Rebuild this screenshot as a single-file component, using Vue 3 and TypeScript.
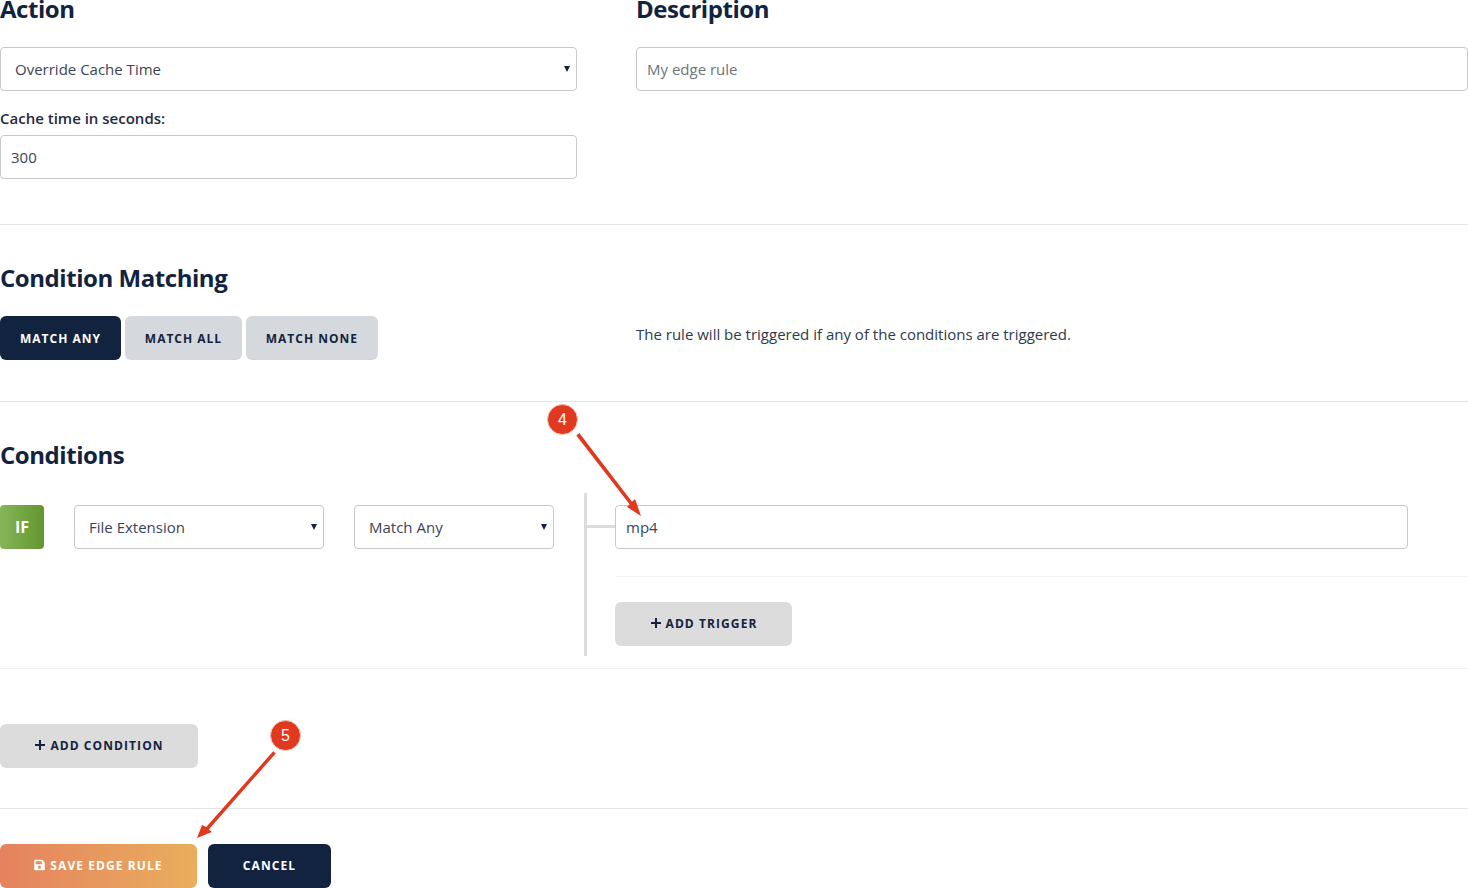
<script setup lang="ts">
const heading = 'Condition Matching'
const matchModes = [
  { label: 'MATCH ANY', active: true },
  { label: 'MATCH ALL', active: false },
  { label: 'MATCH NONE', active: false },
]
</script>

<template>
  <div class="page">
    <section class="top">
      <div class="col">
        <h2>Action</h2>
        <div class="select-wrap">
          <select class="field pick"><option>Override Cache Time</option></select>
          <span class="caret"></span>
        </div>
        <label class="lbl">Cache time in seconds:</label>
        <input class="field" value="300" />
      </div>
      <div class="col">
        <h2>Description</h2>
        <input class="field" placeholder="My edge rule" />
      </div>
    </section>

    <section class="matching">
      <h2>{{ heading }}</h2>
      <div class="match-row">
        <div class="btns">
          <button v-for="m in matchModes" :key="m.label" class="btn" :class="m.active ? 'navy' : 'soft'">{{ m.label }}</button>
        </div>
        <p class="hint">The rule will be triggered if any of the conditions are triggered.</p>
      </div>
    </section>

    <section class="conditions">
      <h2>Conditions</h2>
      <div class="cond">
        <div class="cond-left">
          <div class="if">IF</div>
          <div class="select-wrap w250">
            <select class="field pick"><option>File Extension</option></select>
            <span class="caret"></span>
          </div>
          <div class="select-wrap w200">
            <select class="field pick"><option>Match Any</option></select>
            <span class="caret"></span>
          </div>
        </div>
        <div class="cond-right">
          <span class="connector"></span>
          <input class="field w793" value="mp4" />
          <div class="thin"></div>
          <button class="btn grey lift trigger">
            <svg class="plus" viewBox="0 0 12 12"><path d="M6 1v10M1 6h10" /></svg>ADD TRIGGER
          </button>
        </div>
      </div>
      <button class="btn grey lift add-cond">
        <svg class="plus" viewBox="0 0 12 12"><path d="M6 1v10M1 6h10" /></svg>ADD CONDITION
      </button>
    </section>

    <section class="actions">
      <button class="btn lift save">
        <svg class="disk" viewBox="0 0 448 512"><path fill="currentColor" d="M433.9 129.9l-83.9-83.9A48 48 0 0 0 316.1 32H48C21.5 32 0 53.5 0 80v352c0 26.5 21.5 48 48 48h352c26.5 0 48-21.5 48-48V163.9a48 48 0 0 0-14.1-34zM224 416c-35.3 0-64-28.7-64-64s28.7-64 64-64 64 28.7 64 64-28.7 64-64 64zm96-304.5V212c0 6.6-5.4 12-12 12H76c-6.6 0-12-5.4-12-12V108c0-6.6 5.4-12 12-12h228.5c3.2 0 6.2 1.3 8.5 3.5l3.5 3.5c2.3 2.3 3.5 5.3 3.5 8.5z"/></svg>SAVE EDGE RULE
      </button>
      <button class="btn navy lift cancel">CANCEL</button>
    </section>

    <svg class="arrows" width="1468" height="888" viewBox="0 0 1468 888">
      <g fill="#e0391f" stroke="none">
        <path d="M576.3 435.4L579.3 433L632 501.8L635 499L641 516L627 507L629.6 504.2Z" />
        <path d="M275.8 753.4L273.2 751.2L206.2 827L202 825L197 838L212 832L208.8 829.4Z" />
      </g>
    </svg>
    <span class="badge b4">4</span>
    <span class="badge b5">5</span>
  </div>
</template>

<style>
html, body { margin: 0; overflow: hidden; background: #fff; }
</style>

<style scoped>
.page {
  position: relative;
  width: 1468px;
  height: 888px;
  overflow: hidden;
  font-family: "Open Sans", sans-serif;
  color: #12233f;
  background: #fff;
}
h2 {
  margin: 0;
  font-size: 24px;
  line-height: 20px;
  font-weight: 700;
  letter-spacing: -0.45px;
  color: #12233f;
}
.top {
  display: grid;
  grid-template-columns: 577px 832px;
  column-gap: 59px;
  height: 224px;
  border-bottom: 1px solid #e4e4e4;
}
.col h2 { margin-top: -1px; margin-bottom: 28px; }
.field {
  display: block;
  box-sizing: border-box;
  width: 100%;
  height: 44px;
  padding: 0 10px;
  border: 1px solid #c8c8c8;
  border-radius: 4px;
  background: #fff;
  font-family: inherit;
  font-size: 15px;
  color: #3a4557;
  outline: none;
}
.field::placeholder { color: #6c7480; opacity: 1; }
.pick {
  appearance: none;
  padding-left: 14px;
  padding-right: 24px;
}
.select-wrap { position: relative; }
.caret {
  position: absolute;
  right: 7px;
  top: 19px;
  width: 0;
  height: 0;
  border-left: 3.5px solid transparent;
  border-right: 3.5px solid transparent;
  border-top: 6px solid #12233f;
}
.lbl {
  display: block;
  margin-top: 17px;
  margin-bottom: 7px;
  font-size: 15px;
  font-weight: 600;
  line-height: 20px;
  color: #1f2c40;
}
.matching {
  height: 177px;
  box-sizing: border-box;
  padding-top: 43px;
  border-bottom: 1px solid #e4e4e4;
}
.match-row {
  display: grid;
  grid-template-columns: 577px 1fr;
  column-gap: 59px;
  margin-top: 28px;
}
.btns { display: flex; gap: 4px; }
.btn {
  height: 44px;
  border: 0;
  border-radius: 6px;
  padding: 0;
  font-family: inherit;
  font-size: 12px;
  font-weight: 700;
  letter-spacing: 1.08px;
  color: #12233f;
  display: inline-flex;
  align-items: center;
  justify-content: center;
}
.lift { padding-bottom: 2px; }
.navy { background: #12233f; color: #fff; }
.soft { background: #d5d8dc; }
.btns .btn { padding: 0 20px; letter-spacing: 1px; }
.btns .btn.soft { padding: 0 19.8px; }
.grey { background: #dcdcdc; }
.hint {
  margin: 8px 0 0;
  font-size: 15px;
  line-height: 20px;
  color: #2e3a4c;
}
.conditions {
  height: 407px;
  box-sizing: border-box;
  padding-top: 43px;
  border-bottom: 1px solid #e4e4e4;
}
.cond {
  display: flex;
  margin-top: 28px;
  padding-bottom: 12px;
  border-bottom: 1px solid #f3f3f3;
}
.cond-left {
  display: flex;
  gap: 30px;
  width: 584px;
  padding-top: 12px;
  align-items: flex-start;
}
.if {
  width: 44px;
  height: 44px;
  border-radius: 4px;
  background: linear-gradient(90deg, #86b558, #62962e);
  color: #fff;
  font-size: 16px;
  font-weight: 700;
  line-height: 44px;
  text-align: center;
}
.w250 { width: 250px; }
.w200 { width: 200px; }
.cond-right {
  position: relative;
  flex: 1;
  padding: 12px 0 10px 28px;
  border-left: 3px solid #dcdcdc;
}
.w793 { width: 793px; }
.connector {
  position: absolute;
  left: 0;
  top: 32px;
  width: 28px;
  height: 3px;
  background: #dcdcdc;
}
.thin {
  height: 1px;
  margin: 27px 0 25px;
  background: #f3f3f3;
}
.trigger { width: 177px; display: flex; }
.plus {
  width: 12px;
  height: 12px;
  margin-right: 4px;
  fill: none;
  stroke: #12233f;
  stroke-width: 2;
}
.add-cond { width: 198px; margin-top: 55px; }
.actions {
  display: flex;
  gap: 11px;
  padding-top: 35px;
}
.save {
  width: 197px;
  background: linear-gradient(90deg, #e5825f, #e9ae5c);
  color: #fff;
}
.disk { width: 11px; height: 12px; margin-right: 5px; }
.cancel { width: 123px; }
.arrows {
  position: absolute;
  left: 0;
  top: 0;
  pointer-events: none;
}
.badge {
  position: absolute;
  box-sizing: border-box;
  width: 31px;
  height: 31px;
  border-radius: 50%;
  background: #e0391f;
  border: 1px solid #f3c4bb;
  color: #fff;
  font-family: "Liberation Sans", sans-serif;
  font-size: 16px;
  line-height: 29px;
  text-align: center;
}
.b4 { left: 547px; top: 404px; }
.b5 { left: 270px; top: 720px; }
</style>
